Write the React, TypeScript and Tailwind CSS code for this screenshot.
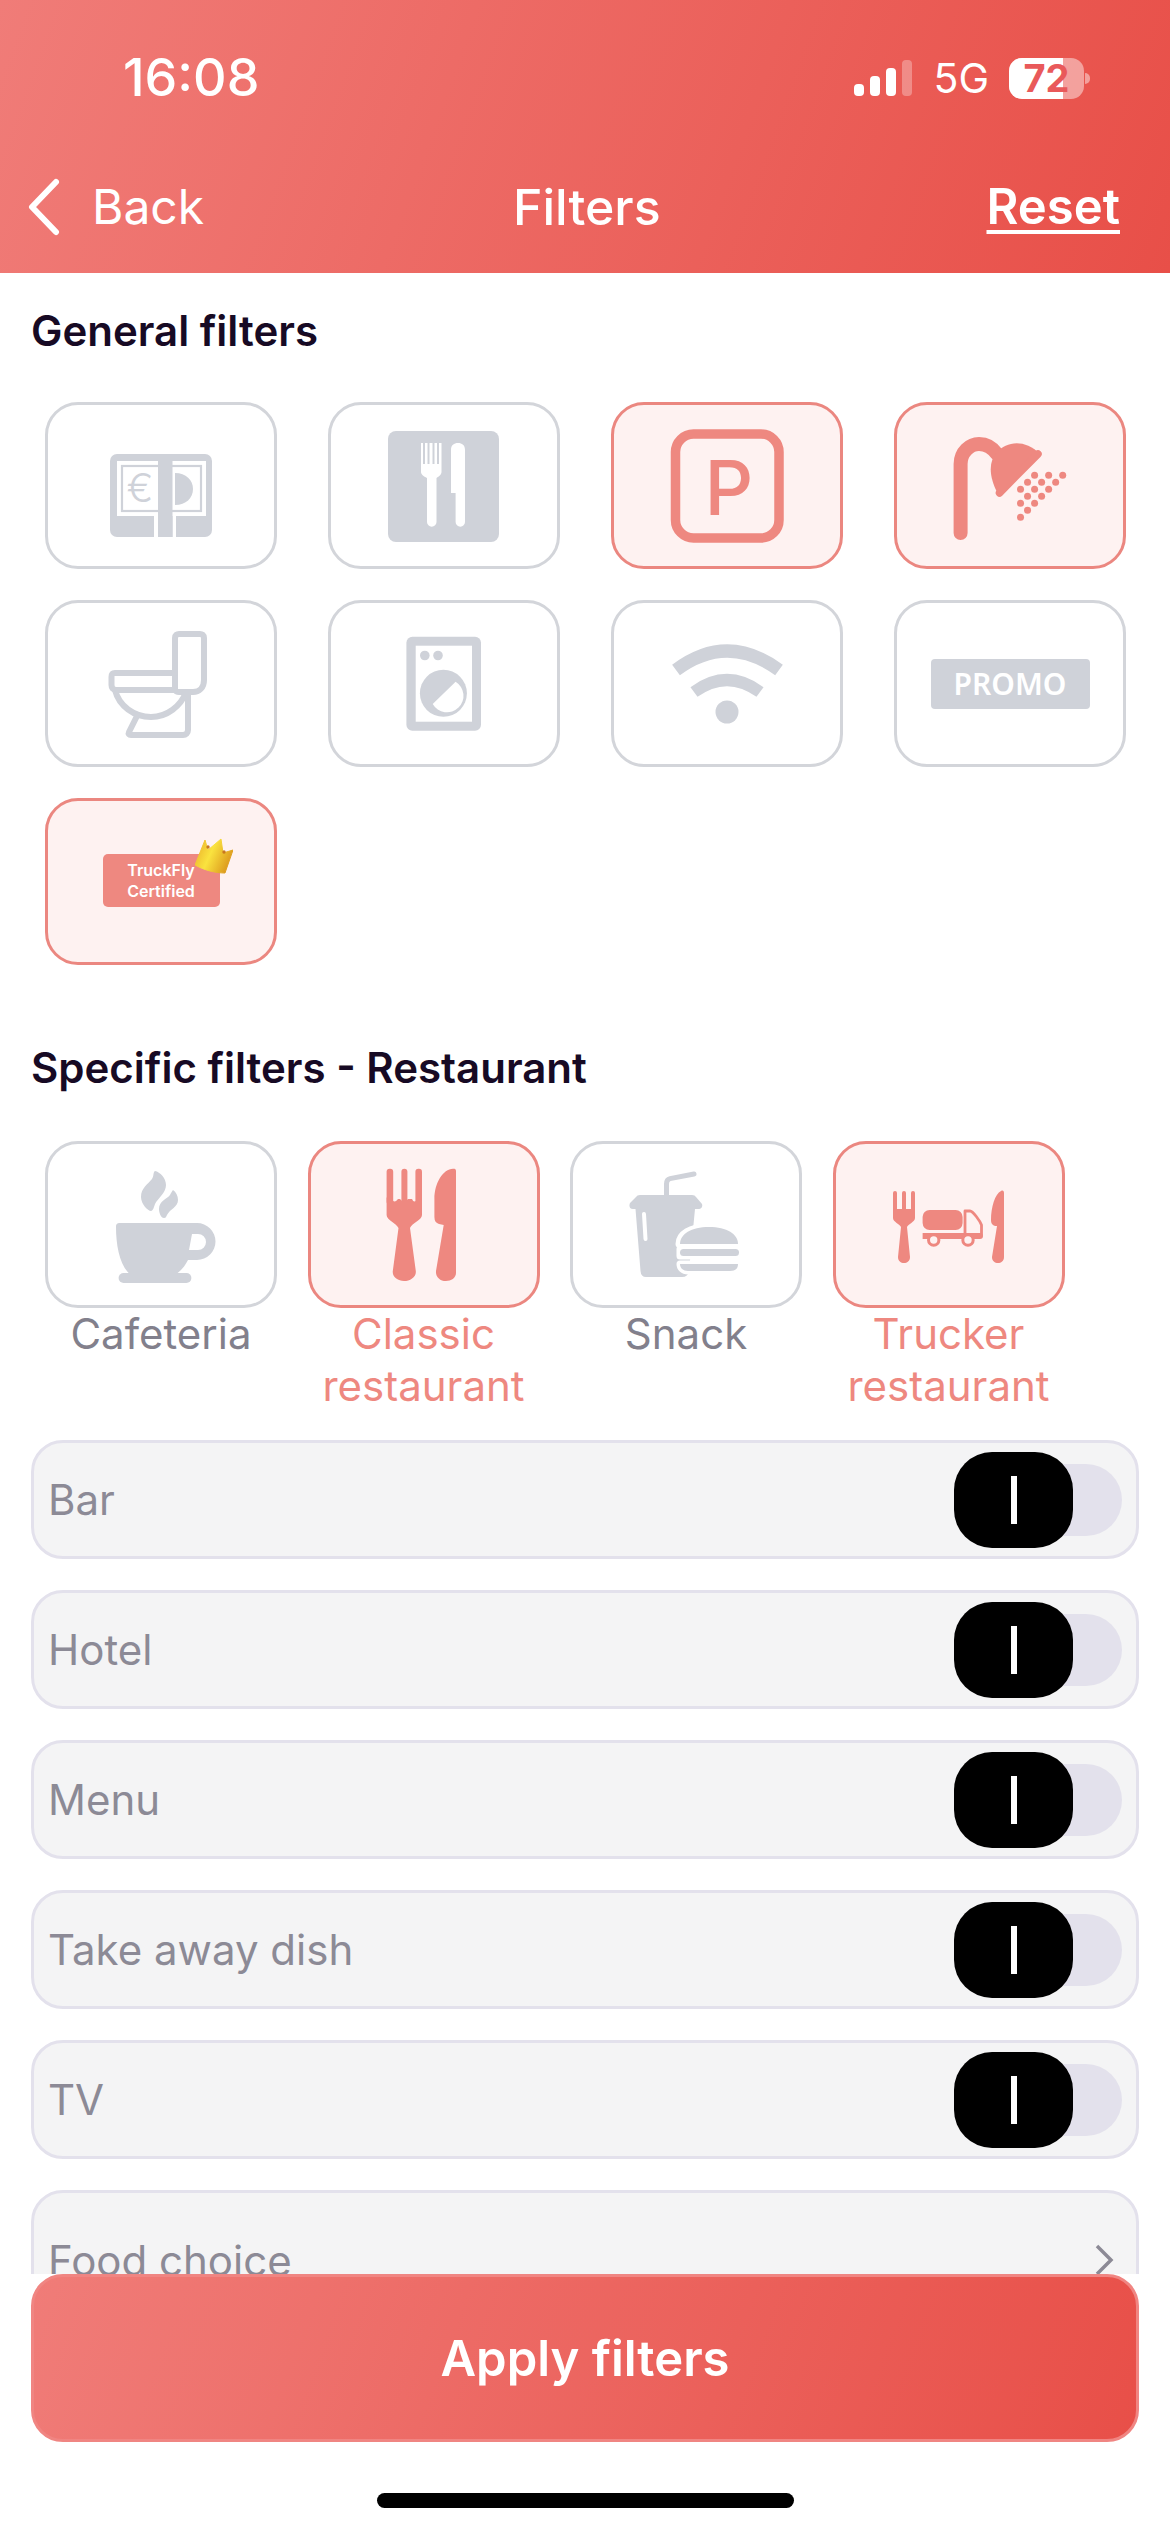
const RED = '#EE8880'
const GRAY = '#CFD2D9'

const SHOWER_DOTS = [
  [1276, 286], [1238, 286], [1200, 286], [1257, 307], [1219, 307], [1181, 307], [1238, 328], [1200, 328],
  [1162, 328], [1219, 349], [1181, 349], [1200, 370], [1162, 370], [1181, 391], [1162, 412],
]

/** Every icon is drawn in tile coordinates, so it fills the 232x167 tile. */
function TileIcon({ children }: { children: React.ReactNode }) {
  return (
    <svg viewBox="0 0 226 161" className="h-full w-full">
      <g transform="translate(-3 -3)">{children}</g>
    </svg>
  )
}

function MoneyIcon() {
  return (
    <TileIcon>
      <rect x="65" y="52" width="102" height="83" rx="7" fill={GRAY} />
      <rect x="72" y="59" width="89" height="55" fill="#fff" />
      <rect x="77" y="64" width="79" height="45" fill="#fff" stroke={GRAY} strokeWidth="2.200" />
      <rect x="109" y="113" width="4" height="22" fill="#fff" />
      <rect x="127.500" y="113" width="3.500" height="22" fill="#fff" />
      <rect x="113" y="58" width="14.500" height="77" fill={GRAY} />
      <path d="M130 71 C141 71 148 78 148 87 C148 96 141 103 130 103 Z" fill={GRAY} />
      <text x="95" y="100" textAnchor="middle" fontSize="40" fontFamily="Inter, sans-serif" fontWeight="300" fill={GRAY}>€</text>
    </TileIcon>
  )
}

function CutleryBoxIcon() {
  return (
    <TileIcon>
      <rect x="60" y="29" width="111" height="111" rx="8" fill={GRAY} />
      <path d="M93 41 H95 V62 H97 V41 H99.5 V62 H101.5 V41 H104.5 V62 H106.5 V41 H109 V62 H111 V41 H113.5 V70 C113.5 73 110 75 108.5 76 V120 A4.7 4.7 0 0 1 99 120 V76 C97 75 93 73 93 70 Z" fill="#fff" />
      <path d="M123 48 C123 43 126 41 130 41 C134 41 137 43 137 48 V120 A4.7 4.7 0 0 1 127.6 120 V91 H123 Z" fill="#fff" />
    </TileIcon>
  )
}

function ParkingIcon() {
  return (
    <TileIcon>
      <rect x="64.5" y="32" width="103.5" height="104" rx="18" fill="none" stroke={RED} strokeWidth="9.5" />
      <text x="118" y="113" textAnchor="middle" fontSize="76" fontFamily="Inter, sans-serif" fontWeight="500" fill={RED}>P</text>
    </TileIcon>
  )
}

function ShowerIcon() {
  return (
    <TileIcon>
      <path d="M66.6 131 V62 C66.6 50 76 42 85 42 C92 42 98 45 103 52" fill="none" stroke={RED} strokeWidth="14" strokeLinecap="round" />
      <path d="M146 52 C130 36 112 40 103 50 C94 60 95 75 104 92 Z" fill={RED} />
      <path d="M144 52 L105.5 91" fill="none" stroke={RED} strokeWidth="7.5" strokeLinecap="round" />
      {SHOWER_DOTS.map(([x, y]) => (
        <circle key={`${x}-${y}`} cx={(x - 820) / 2.703} cy={(y - 66) / 3} r="3.5" fill={RED} />
      ))}
    </TileIcon>
  )
}

function ToiletIcon() {
  return (
    <TileIcon>
      <g fill="none" stroke={GRAY} strokeWidth="6" strokeLinejoin="round" strokeLinecap="round">
        <path d="M130 90 V38 C130 35 132 34 134 34 H155 C157 34 159 35 159 38 V80 C159 88 154 92 148 92 H134 C132 92 130 91 130 90 Z" />
        <path d="M130 73 H70 C67 73 66.5 75 66.5 77 V85 C66.5 88 68 90 71 90 H130" />
        <path d="M70 90 C74 106 89 117 106 117 C122 117 136 106 141 92" />
        <path d="M92.5 115 L84 132 C83 134 84 135 86 135 H138 C141 135 143 133 143 130 V94" />
      </g>
    </TileIcon>
  )
}

function WasherIcon() {
  return (
    <TileIcon>
      <rect x="78.4" y="36.7" width="74.6" height="94" rx="6" fill={GRAY} />
      <rect x="87.7" y="45.7" width="56.3" height="76" fill="#fff" />
      <circle cx="96.8" cy="55.5" r="4.8" fill={GRAY} />
      <circle cx="110" cy="55.5" r="4.8" fill={GRAY} />
      <circle cx="115.4" cy="93.3" r="23.5" fill={GRAY} />
      <path d="M104.7 104 L127.6 81.7 A16.5 16.5 0 1 1 104.7 104 Z" fill="#fff" />
    </TileIcon>
  )
}

function WifiIcon() {
  return (
    <TileIcon>
      <path d="M65 70 Q116 32 168 70" fill="none" stroke={GRAY} strokeWidth="13" strokeLinejoin="round" />
      <path d="M83 92 Q116 68 149 92" fill="none" stroke={GRAY} strokeWidth="12" />
      <circle cx="116" cy="112" r="11.5" fill={GRAY} />
    </TileIcon>
  )
}

function CrownIcon() {
  return (
    <svg viewBox="0 0 38 36" className="absolute top-[-16px] right-[-13px] h-[36px] w-[38px]">
      <defs>
        <linearGradient id="crown" x1="0" y1="0" x2="1" y2="0.4">
          <stop offset="0" stopColor="#E9A928" />
          <stop offset="0.5" stopColor="#FAE33F" />
          <stop offset="1" stopColor="#DE9E1F" />
        </linearGradient>
      </defs>
      <path d="M10 2 L13 12 L26 1 L28 15 L38 12 L30 35 C20 35 9 32 0 27 Z" fill="url(#crown)" stroke="url(#crown)" strokeWidth="1" strokeLinejoin="round" />
      <circle cx="13" cy="9" r="1.7" fill="#C9781D" />
      <circle cx="29" cy="14" r="1.7" fill="#C9781D" />
    </svg>
  )
}

function MugIcon() {
  return (
    <TileIcon>
      <path d="M110 30 C115 31 121 37 121 44 C121 52 113 57 110 63 C109 66 108 70 106 70 C103 70 96 63 96 56 C96 47 103 43 107 38 C109 35 108 31 110 30 Z" fill={GRAY} />
      <path d="M128 49 C131 51 133 55 133 59 C133 66 125 68 122 74 C121 76 121 77 119 77 C116 77 114 72 114 68 C114 60 122 58 125 54 C126 52 127 50 128 49 Z" fill={GRAY} />
      <path
        fillRule="evenodd"
        d="M71 86 C71 83 72 82 75 82 H152 A18.5 18.5 0 1 1 152 119 H143 C140 125 136 130 130 134 H86 C75 126 71 105 71 86 Z M147 93 L144 109 H153 A8 8 0 0 0 153 93 Z"
        fill={GRAY}
      />
      <rect x="73.6" y="132" width="72.8" height="10" rx="5" fill={GRAY} />
    </TileIcon>
  )
}

function CutleryIcon() {
  return (
    <TileIcon>
      <g fill={RED}>
        <rect x="78.6" y="27.7" width="6.6" height="36" rx="3" />
        <rect x="93.4" y="27.7" width="6" height="36" rx="3" />
        <rect x="107.4" y="27.7" width="6.6" height="36" rx="3" />
        <path d="M78.6 56 Q78.6 58 81 58 H84 Q86 63 90 58 H92 Q96 63 100 58 H104 Q106 63 110 58 H114 V74 C114 79 104 82 102 87 L107.8 130 C108.5 136 102 140 96 140 C90 140 84 136 84.8 130 L90.5 87 C88 82 78.6 79 78.6 74 Z" />
        <path d="M148 30 V132 C148 137 143 140 138 140 C132 140 127.5 136 128 130 L135.7 84 L131 83 C128 82 126.4 80 126.4 76 V58 C126.4 42 135 28 145 27.7 C147 27.6 148 28 148 30 Z" />
      </g>
    </TileIcon>
  )
}

function SnackIcon() {
  return (
    <TileIcon>
      <path d="M96.5 56 V43 C96.5 40 98 38 100 37.6 L124 33" fill="none" stroke={GRAY} strokeWidth="5" strokeLinecap="round" />
      <path d="M63 68 C59 68 59 64 60 62 L66 56 Q67 54 70 54 H122 Q125 54 126 56 L132 63 C133 66 131 68 129 68 H125 L119 130 Q118 136 112 136 H76 Q71 136 70.500 130 L65.500 68 Z" fill={GRAY} />
      <path d="M74 73 L75.500 98" fill="none" stroke="#fff" strokeWidth="4" strokeLinecap="round" />
      <path d="M109 103 C109 93 120 86 138 86 C156 86 168 93 168 103 Z M110 108 H168 V115 H110 Z M110 123 H168 C168 127 166 130 160 130 H118 C113 130 110 127 110 123 Z" fill="#fff" stroke="#fff" strokeWidth="7" strokeLinejoin="round" />
      <path d="M110 103 C110 93 121 86 139 86 C157 86 168 93 168 103 Z" fill={GRAY} />
      <rect x="110" y="108" width="59" height="7" rx="3.5" fill={GRAY} />
      <path d="M110 123 H168 C168 127 166 130 160 130 H118 C113 130 110 127 110 123 Z" fill={GRAY} />
    </TileIcon>
  )
}

function TruckCutleryIcon() {
  return (
    <TileIcon>
      <g fill={RED}>
        <rect x="60" y="50" width="4" height="24" rx="2" />
        <rect x="69" y="50" width="4" height="24" rx="2" />
        <rect x="78" y="50" width="4" height="24" rx="2" />
        <path d="M60 68 H82 V77 C82 81 75 83 74 86 L77 116 C77 120 74 122 71 122 C68 122 65 120 65 116 L68 86 C67 83 60 81 60 77 Z" />
        <path d="M171 52 V116 C171 120 168 122 165 122 C162 122 159 120 159 116 L164 85 C160 85 158 83 158 79 C158 66 162 53 168 50 C170 49 171 50 171 52 Z" />
        <rect x="89.600" y="69" width="40" height="20" rx="7" />
        <path d="M89.600 92 H147 C149 92 150 93.500 150 95 C150 97 149 98 147 98 H89.600 C89.600 98 89.600 96 89.600 92 Z" />
      </g>
      <path d="M132 70 L137 70 C140 70 147 80 148.500 84 V94 H132 Z" fill="none" stroke={RED} strokeWidth="2.800" strokeLinejoin="round" />
      <circle cx="100.700" cy="99" r="5.200" fill="#FEF2F1" stroke={RED} strokeWidth="3" />
      <circle cx="135" cy="99" r="5.200" fill="#FEF2F1" stroke={RED} strokeWidth="3" />
    </TileIcon>
  )
}

function Tile({ active, children }: { active?: boolean; children: React.ReactNode }) {
  return (
    <div
      className={
        active
          ? 'relative h-[167px] w-[232px] shrink-0 rounded-[33px] border-[3px] border-[#EB8780] bg-[#FEF2F1]'
          : 'relative h-[167px] w-[232px] shrink-0 rounded-[33px] border-[3px] border-[#D3D5DA] bg-white'
      }
    >
      {children}
    </div>
  )
}

function CategoryTile({ label, active, icon }: { label: string; active?: boolean; icon: React.ReactNode }) {
  return (
    <div className="flex w-[232px] flex-col items-center">
      <Tile active={active}>{icon}</Tile>
      <p className={active ? 'text-center text-[42px] leading-[52px] text-[#EE8880]' : 'text-center text-[42px] leading-[52px] text-[#82808C]'}>
        {label}
      </p>
    </div>
  )
}

function ToggleRow({ label }: { label: string }) {
  return (
    <div className="flex h-[119px] items-center justify-between rounded-[32px] border-[3px] border-[#E3E1EC] bg-[#F4F4F5] pr-[14px] pl-[14px]">
      <span className="text-[42px] text-[#8C8A96]">{label}</span>
      <span className="relative h-[72px] w-[140px] rounded-full bg-[#E3E1EC]">
        <span className="absolute top-[-12px] left-[-28px] flex h-[96px] w-[119px] items-center justify-center rounded-[38px] bg-black">
          <span className="h-[48px] w-[6px] bg-white" />
        </span>
      </span>
    </div>
  )
}

export default function App() {
  return (
    <div className="flex h-[2532px] w-[1170px] flex-col overflow-hidden bg-white font-['Inter',sans-serif]">
      <header className="flex h-[273px] shrink-0 flex-col bg-[linear-gradient(110deg,#F07C78,#E84F48)] text-white">
        <div className="flex h-[177px] shrink-0 items-start justify-between">
          <span className="mt-[47px] ml-[123px] text-[52px] leading-[62px] font-medium">16:08</span>
          <div className="mt-[57px] mr-[80px] flex items-center">
            <svg viewBox="0 0 58 36" className="h-[36px] w-[58px]">
              <rect x="0" y="24" width="10" height="12" rx="4" fill="#fff" />
              <rect x="16" y="16" width="10" height="20" rx="4" fill="#fff" />
              <rect x="32" y="8" width="10" height="28" rx="4" fill="#fff" />
              <rect x="48" y="0" width="10" height="36" rx="4" fill="#fff" fillOpacity="0.3" />
            </svg>
            <span className="ml-[21px] text-[41px] leading-[42px]">5G</span>
            <span className="relative ml-[20px] h-[41px] w-[75px] rounded-[13px] bg-white/45">
              <span className="absolute inset-y-0 left-0 w-[54px] rounded-l-[13px] bg-white" />
              <span className="absolute inset-0 flex items-center justify-center text-[38px] leading-[41px] font-bold text-[#E9595A]">72</span>
            </span>
            <span className="ml-[1px] h-[11px] w-[5px] rounded-r-full bg-white/45" />
          </div>
        </div>
        <nav className="relative flex items-center justify-between pr-[50px] pl-[28px]">
          <div className="flex items-center">
            <svg viewBox="0 0 32 58" className="h-[58px] w-[32px]">
              <path d="M28 4 L4 29 L28 54" fill="none" stroke="#fff" strokeWidth="6" strokeLinecap="round" strokeLinejoin="round" />
            </svg>
            <span className="ml-[32px] text-[48px] leading-[60px]">Back</span>
          </div>
          <span className="absolute left-[513px] text-[50px] leading-[60px] font-medium">Filters</span>
          <span className="text-[49px] leading-[60px] font-semibold underline decoration-[4px] underline-offset-[6px]">Reset</span>
        </nav>
      </header>

      <main className="min-h-0 flex-1 overflow-hidden pr-[31px] pl-[31px]">
        <h2 className="mt-[33px] text-[42px] leading-[50px] font-semibold text-[#170A24]">General filters</h2>
        <div className="mt-[46px] ml-[14px] grid w-[1080px] grid-cols-[232px_232px_232px_232px] gap-x-[51px] gap-y-[31px]">
          <Tile><MoneyIcon /></Tile>
          <Tile><CutleryBoxIcon /></Tile>
          <Tile active><ParkingIcon /></Tile>
          <Tile active><ShowerIcon /></Tile>
          <Tile><ToiletIcon /></Tile>
          <Tile><WasherIcon /></Tile>
          <Tile><WifiIcon /></Tile>
          <Tile>
            <div className="flex h-full items-center justify-center">
              <span className="flex h-[50px] w-[159px] items-center justify-center rounded-[4px] bg-[#CFD2D9] font-['Noto_Sans',sans-serif] text-[30px] font-semibold text-white">
                PROMO
              </span>
            </div>
          </Tile>
          <Tile active>
            <div className="flex h-full items-center justify-center pb-[2px]">
              <span className="relative flex h-[53px] w-[117px] flex-col items-center justify-center rounded-[5px] bg-[#EE8880] text-center text-[16px] leading-[21px] font-semibold text-white">
                TruckFly
                <br />
                Certified
                <CrownIcon />
              </span>
            </div>
          </Tile>
        </div>

        <h2 className="mt-[78px] text-[42px] leading-[50px] font-semibold text-[#170A24]">Specific filters - Restaurant</h2>
        <div className="mt-[48px] ml-[14px] flex gap-[30.500px]">
          <CategoryTile label="Cafeteria" icon={<MugIcon />} />
          <CategoryTile label="Classic restaurant" active icon={<CutleryIcon />} />
          <CategoryTile label="Snack" icon={<SnackIcon />} />
          <CategoryTile label="Trucker restaurant" active icon={<TruckCutleryIcon />} />
        </div>

        <div className="mt-[28px] flex flex-col gap-[31px]">
          <ToggleRow label="Bar" />
          <ToggleRow label="Hotel" />
          <ToggleRow label="Menu" />
          <ToggleRow label="Take away dish" />
          <ToggleRow label="TV" />
          <div className="flex h-[140px] items-center justify-between rounded-[32px] border-[3px] border-[#E3E1EC] bg-[#F4F4F5] pr-[22px] pl-[14px]">
            <span className="text-[42px] text-[#8C8A96]">Food choice</span>
            <svg viewBox="0 0 20 32" className="h-[32px] w-[20px]">
              <path d="M3 2 L17 16 L3 30" fill="none" stroke="#8C8A96" strokeWidth="3.500" />
            </svg>
          </div>
        </div>
      </main>

      <footer className="flex h-[258px] shrink-0 flex-col items-center bg-white">
        <button className="flex h-[168px] w-[1108px] items-center justify-center rounded-[32px] border-[3px] border-[#F08582] bg-[linear-gradient(110deg,#F07C78,#E84F48)] pt-[2px] text-[49px] font-semibold text-white">
          Apply filters
        </button>
        <span className="mt-[51px] h-[15px] w-[417px] rounded-full bg-black" />
      </footer>
    </div>
  )
}
